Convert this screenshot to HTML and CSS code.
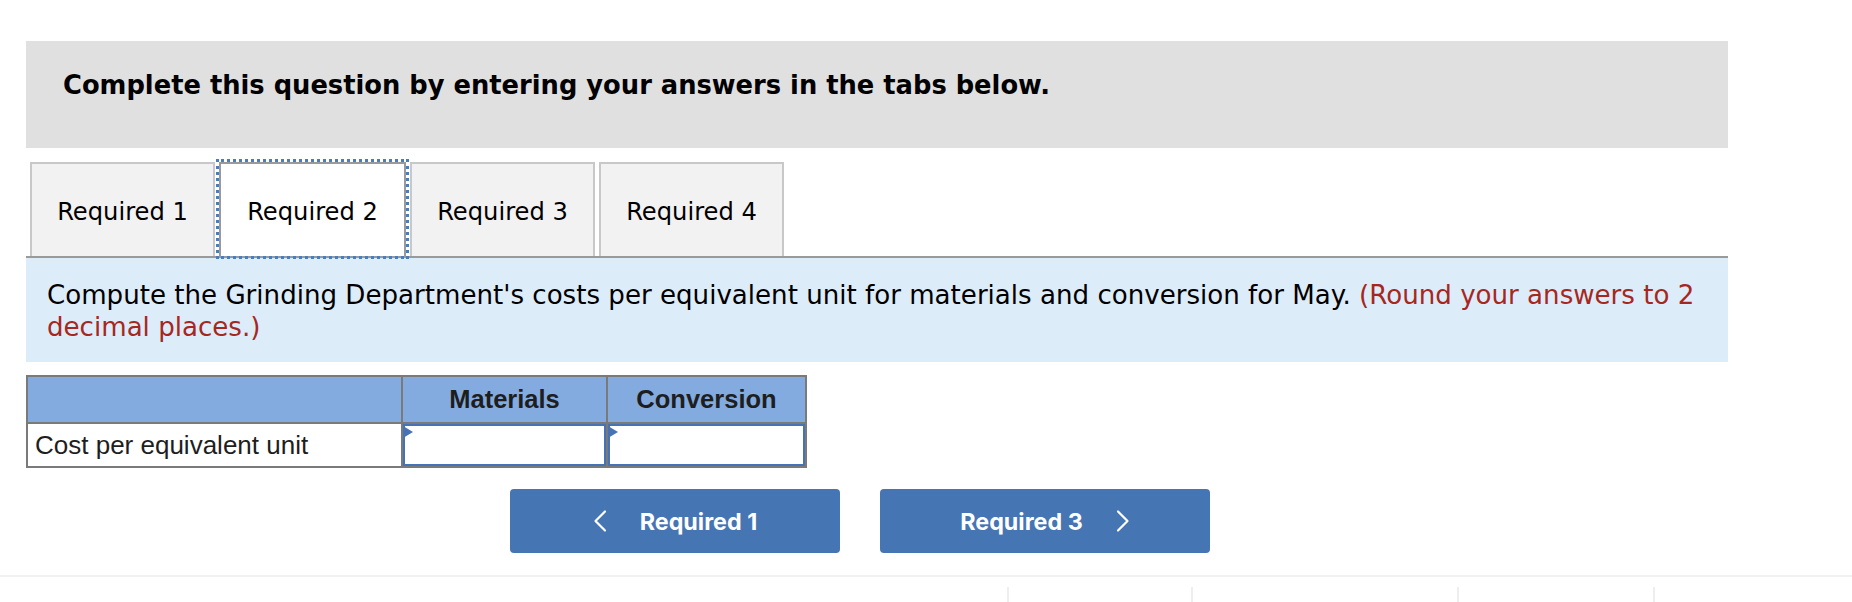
FILE: index.html
```html
<!DOCTYPE html>
<html lang="en">
<head>
<meta charset="utf-8">
<title>Required 2</title>
<link rel="stylesheet" href="styles.css">
</head>
<body>
<div class="wrap">
  <div class="intro">Complete this question by entering your answers in the tabs below.</div>

  <div class="tabs">
    <div class="tab">Required 1</div>
    <div class="tab tab-active">Required 2</div>
    <div class="tab">Required 3</div>
    <div class="tab">Required 4</div>
  </div>

  <div class="panel">
    Compute the Grinding Department's costs per equivalent unit for materials and conversion for May. <span class="note">(Round your answers to 2 decimal places.)</span>
  </div>

  <div class="grid">
    <div class="hcell"></div>
    <div class="hcell">Materials</div>
    <div class="hcell">Conversion</div>
    <div class="lcell">Cost per equivalent unit</div>
    <div class="icell"><div class="input"></div></div>
    <div class="icell"><div class="input"></div></div>
  </div>

  <div class="nav">
    <div class="btn">
      <svg class="chev" width="14" height="24" viewBox="0 0 14 24"><polyline points="12,2.5 2.5,12 12,21.5" fill="none" stroke="#fff" stroke-width="2.2" stroke-linecap="round" stroke-linejoin="round"/></svg>
      <span>Required 1</span>
    </div>
    <div class="btn">
      <span>Required 3</span>
      <svg class="chev" width="14" height="24" viewBox="0 0 14 24"><polyline points="2,2.5 11.5,12 2,21.5" fill="none" stroke="#fff" stroke-width="2.2" stroke-linecap="round" stroke-linejoin="round"/></svg>
    </div>
  </div>
</div>

<div class="footer">
  <div class="fcell fcell-first"></div>
  <div class="fcell fcell-a"></div>
  <div class="fcell fcell-b"></div>
  <div class="fcell fcell-c"></div>
  <div class="fcell fcell-d"></div>
</div>
</body>
</html>
```

FILE: styles.css
```css
html, body {
  margin: 0;
  padding: 0;
  background: #ffffff;
}

body {
  font-family: "DejaVu Sans", Verdana, sans-serif;
  color: #000;
}

.wrap {
  margin-left: 26px;
  width: 1702px;
  padding-top: 41px;
}

.intro {
  box-sizing: border-box;
  height: 107px;
  background: #e0e0e0;
  padding: 29px 0 0 37px;
  font-weight: bold;
  font-size: 25.75px;
  line-height: 30px;
}

.tabs {
  display: flex;
  margin-top: 14px;
  padding-left: 4px;
  gap: 4px;
}

.tab {
  box-sizing: border-box;
  width: 185px;
  height: 94px;
  background: #f2f2f2;
  border: 2px solid #c8c8c8;
  border-bottom: none;
  display: flex;
  align-items: center;
  justify-content: center;
  padding-top: 4px;
  font-size: 24.2px;
}

.tab-active {
  width: 187px;
  background: #ffffff;
  border-color: #9a9a9a;
  outline: 3px dotted #4a7cc0;
  position: relative;
  z-index: 1;
}

.panel {
  background: #ddecf9;
  border-top: 2px solid #9a9a9a;
  padding: 21px 21px 19px 21px;
  font-size: 26.1px;
  line-height: 32px;
}

.note {
  color: #a5281f;
}

.grid {
  display: grid;
  grid-template-columns: 373px 203px 197px;
  grid-template-rows: 45px 42px;
  gap: 2px;
  padding: 2px;
  background: #7a7a7a;
  width: max-content;
  margin-top: 13px;
  font-family: "Liberation Sans", Arial, sans-serif;
  font-size: 25.5px;
  color: #1e1e1e;
}

.hcell {
  background: #83abdf;
  font-weight: bold;
  display: flex;
  align-items: center;
  justify-content: center;
}

.lcell {
  background: #ffffff;
  display: flex;
  align-items: center;
  padding-left: 7px;
  font-size: 26px;
}

.icell {
  background: #ffffff;
  display: flex;
}

.input {
  flex: 1;
  border: 2px solid #4673b6;
  position: relative;
}

.input::before {
  content: "";
  position: absolute;
  left: -2px;
  top: 0;
  width: 0;
  height: 0;
  border-left: 10px solid #4673b6;
  border-top: 6px solid transparent;
  border-bottom: 6px solid transparent;
}

.nav {
  display: flex;
  gap: 40px;
  margin-top: 21px;
  padding-left: 484px;
}

.btn {
  box-sizing: border-box;
  width: 330px;
  height: 64px;
  background: #4675b3;
  border-radius: 4px;
  color: #ffffff;
  font-family: Inter, Roboto, sans-serif;
  font-weight: 700;
  font-size: 23.3px;
  display: flex;
  align-items: center;
  justify-content: center;
  gap: 33px;
}

.chev {
  display: block;
}

.footer {
  margin-top: 22px;
  border-top: 2px solid #f1f1f1;
  padding-top: 10px;
  display: flex;
  height: 30px;
}

.fcell {
  height: 30px;
}

.fcell-first {
  width: 1007px;
}

.fcell-a,
.fcell-b,
.fcell-c,
.fcell-d {
  border-left: 2px solid #eeeeee;
}

.fcell-a {
  width: 182px;
}

.fcell-b {
  width: 264px;
}

.fcell-c {
  width: 194px;
}

.fcell-d {
  flex: 1;
}
```
